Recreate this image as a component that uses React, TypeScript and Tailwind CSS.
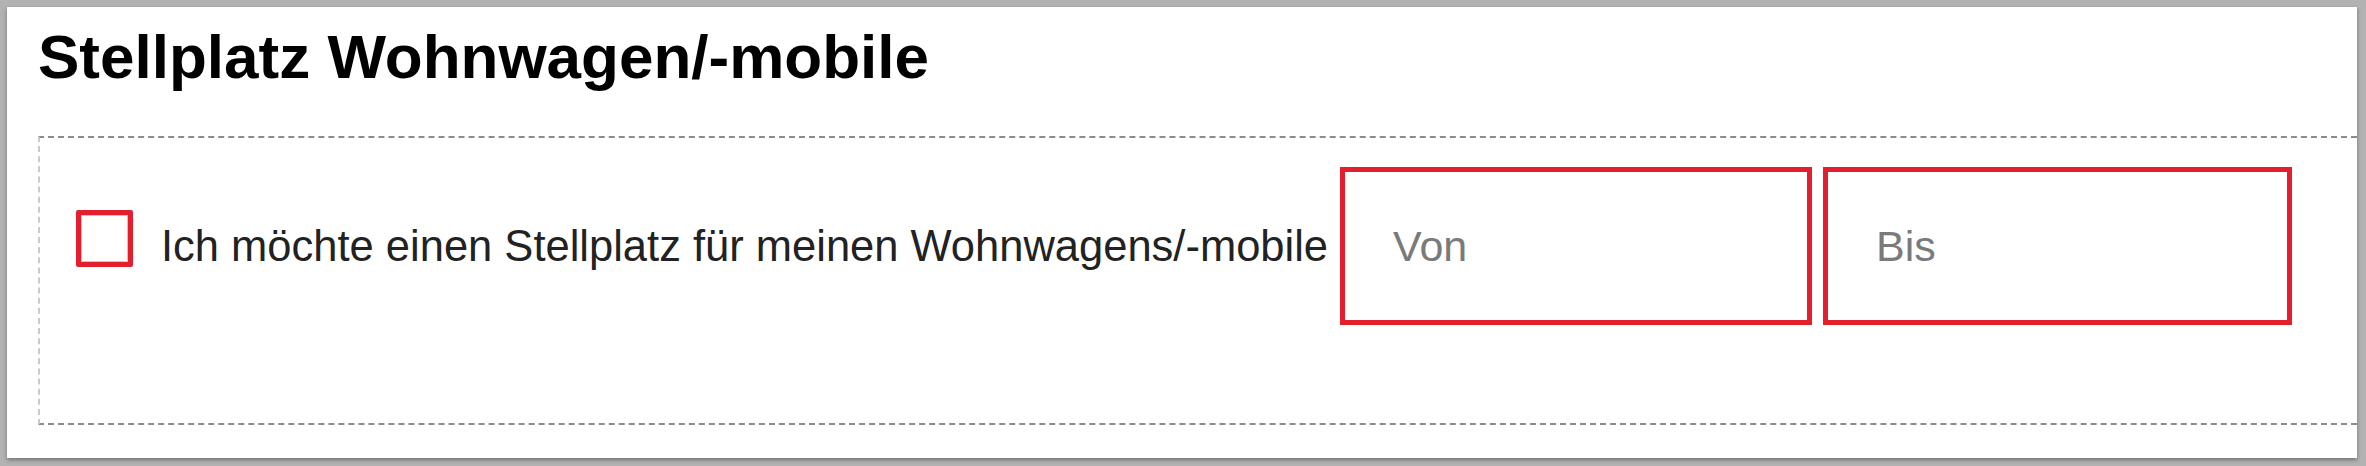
import React from 'react';

function DateBox({ label, width }: { label: string; width: string }) {
  return (
    <div
      className={`${width} h-[158px] shrink-0 border-[5px] border-[#e31e2d] bg-white flex items-center pl-[48px]`}
    >
      <span className="text-[43px] leading-[50px] text-[#7a7a7a]">{label}</span>
    </div>
  );
}

export default function App() {
  return (
    <div
      className="w-[2366px] h-[466px] bg-[#b2b2b2] pt-[7px] pl-[7px] pr-[9px] pb-[8px]"
      style={{ fontFamily: '"Liberation Sans", Arial, sans-serif' }}
    >
      <div className="h-full bg-white overflow-hidden pl-[31px] pt-[15px] shadow-[0_2px_4px_rgba(0,0,0,0.35)]">
        <h1 className="text-[62px] leading-[70px] font-bold text-black">Stellplatz Wohnwagen/-mobile</h1>

        <section className="mt-[44px] h-[289px] border-t-2 border-b-2 border-l-2 border-dashed border-t-[#8c8c8c] border-b-[#8c8c8c] border-l-[#cacaca] pl-[36px] pt-[29px]">
          <div className="flex items-center">
            <div className="w-[57px] h-[57px] shrink-0 mb-[15px] border-[5px] border-[#e31e2d] rounded-[2px] shadow-[inset_0_0_0_1px_#c8c8c8]" />
            <label className="ml-[28px] text-[43.5px] leading-[50px] text-[#222] whitespace-nowrap">
              Ich möchte einen Stellplatz für meinen Wohnwagens/-mobile
            </label>
            <div className="ml-[12px] flex gap-[11px]">
              <DateBox label="Von" width="w-[472px]" />
              <DateBox label="Bis" width="w-[469px]" />
            </div>
          </div>
        </section>
      </div>
    </div>
  );
}
